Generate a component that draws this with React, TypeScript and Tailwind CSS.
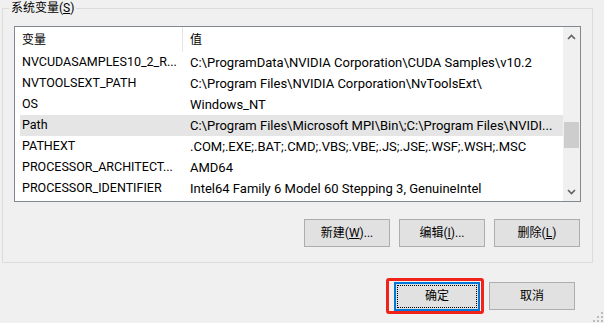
import React from 'react'

const font = { fontFamily: 'Roboto, "Noto Sans CJK SC", sans-serif' }

const rows = [
  { name: 'NVCUDASAMPLES10_2_R...', value: 'C:\\ProgramData\\NVIDIA Corporation\\CUDA Samples\\v10.2' },
  { name: 'NVTOOLSEXT_PATH', value: 'C:\\Program Files\\NVIDIA Corporation\\NvToolsExt\\' },
  { name: 'OS', value: 'Windows_NT' },
  { name: 'Path', value: 'C:\\Program Files\\Microsoft MPI\\Bin\\;C:\\Program Files\\NVIDI...', selected: true },
  { name: 'PATHEXT', value: '.COM;.EXE;.BAT;.CMD;.VBS;.VBE;.JS;.JSE;.WSF;.WSH;.MSC' },
  { name: 'PROCESSOR_ARCHITECT...', value: 'AMD64' },
  { name: 'PROCESSOR_IDENTIFIER', value: 'Intel64 Family 6 Model 60 Stepping 3, GenuineIntel' },
]

const Chevron = ({ down }: { down?: boolean }) => (
  <svg width="9" height="6" viewBox="0 0 9 6" className={down ? 'rotate-180' : ''}>
    <path d="M1 5 L4.5 1.5 L8 5" fill="none" stroke="#606060" strokeWidth="1.6" />
  </svg>
)

const WinButton = ({ children }: { children: React.ReactNode }) => (
  <button className="w-[86px] h-[28px] bg-[#e1e1e1] border border-[#adadad] text-[12px] text-black flex items-center justify-center">
    {children}
  </button>
)

const EnvVarsDialog = () => {
  return (
    <div className="w-[604px] h-[323px] bg-[#f0f0f0] overflow-hidden relative text-black" style={font}>
      <div className="pt-[8px] pl-[2px]">
        <div className="relative w-[591px] h-[255px] border border-[#dcdcdc] pl-[11px] pt-[17px]">
          <span className="absolute -top-[10px] left-[6px] px-[2px] bg-[#f0f0f0] text-[12px] leading-[18px]">
            系统变量(<span className="underline">S</span>)
          </span>

          <div className="w-[567px] h-[176px] border border-[#828790] bg-white flex">
            <div className="flex-1 flex flex-col">
              <div className="h-[25px] flex items-stretch text-[12px]">
                <div className="w-[168px] pl-[7px] flex items-center border-r border-[#e5e5e5]">变量</div>
                <div className="flex-1 pl-[7px] flex items-center">值</div>
              </div>
              {rows.map(row => (
                <div
                  key={row.name}
                  className={`h-[21px] ml-[5px] flex items-center whitespace-nowrap ${row.selected ? 'bg-[#e5e5e5]' : ''}`}
                >
                  <div className="w-[168px] pl-[2px] overflow-hidden text-[12.5px]">{row.name}</div>
                  <div className="flex-1 pl-[2px] overflow-hidden text-[13px]">{row.value}</div>
                </div>
              ))}
            </div>

            <div className="w-[17px] bg-[#f0f0f0] flex flex-col">
              <div className="h-[17px] flex items-center justify-center pt-[3px]">
                <Chevron />
              </div>
              <div className="flex-1">
                <div className="mt-[78px] mx-[1px] h-[26px] bg-[#cdcdcd]" />
              </div>
              <div className="h-[17px] flex items-center justify-center pb-[2px]">
                <Chevron down />
              </div>
            </div>
          </div>

          <div className="w-[567px] pr-[1px] mt-[17px] flex justify-end gap-[9px]">
            <WinButton>新建(<span className="underline">W</span>)...</WinButton>
            <WinButton>编辑(<span className="underline">I</span>)...</WinButton>
            <WinButton>删除(<span className="underline">L</span>)</WinButton>
          </div>
        </div>
      </div>

      <div className="mt-[15px] w-[575px] flex justify-end items-center gap-[5px]">
        <div className="w-[98px] h-[36px] border-[3px] border-[#f0231b] rounded-[3px] pl-[5px] pr-[1px] flex items-center">
          <button className="w-[86px] h-[29px] border-2 border-[#0078d7] bg-[#e1e1e1] p-[1px]">
            <div className="w-full h-full border border-dotted border-black flex items-center justify-center text-[12px]">
              确定
            </div>
          </button>
        </div>
        <WinButton>取消</WinButton>
      </div>

      <svg className="absolute right-[1px] bottom-[1px]" width="10" height="10" viewBox="0 0 10 10">
        {[[8, 0], [8, 4], [4, 4], [8, 8], [4, 8], [0, 8]].map(([x, y]) => (
          <rect key={`${x}-${y}`} x={x} y={y} width="2" height="2" fill="#bcbcbc" />
        ))}
      </svg>
    </div>
  )
}

export default EnvVarsDialog
